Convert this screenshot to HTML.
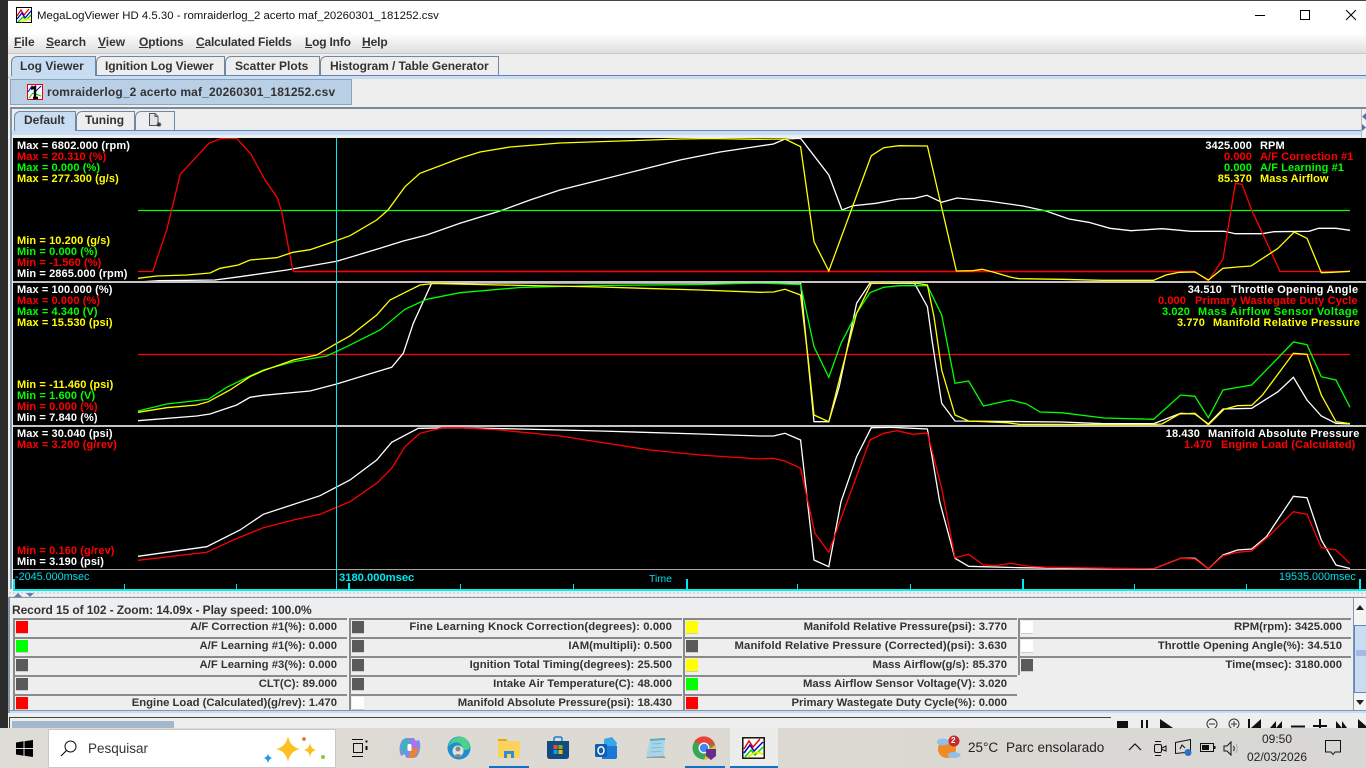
<!DOCTYPE html>
<html><head><meta charset="utf-8"><title>MegaLogViewer HD</title>
<style>
html,body{margin:0;padding:0;width:1366px;height:768px;overflow:hidden;background:#eee}
body{position:relative;font-family:"Liberation Sans",sans-serif}
.a{position:absolute}
.t{position:absolute;white-space:nowrap;line-height:14px;height:14px}
.m{font:bold 12px "Liberation Sans",sans-serif;color:#333;top:35px}
.m u{text-decoration:underline}
.tb{position:absolute;background:#eee;border:1px solid #6f87a0;border-bottom:0;box-sizing:border-box;top:56px;height:20px;border-top-left-radius:6px 6px}
.l{position:absolute;white-space:nowrap;font:bold 11px/11px "Liberation Sans",sans-serif;letter-spacing:.1px;height:11px;margin-top:1px}
.w{color:#fff}.r{color:#f00}.g{color:#0f0}.y{color:#ff0}
.v{position:absolute;white-space:nowrap;font:bold 11px/11px "Liberation Sans",sans-serif;letter-spacing:.1px;height:11px;text-align:right;margin-top:1px}
.c{position:absolute;height:19px;box-sizing:border-box;border-top:2px solid #8a8a8a;border-left:2px solid #8a8a8a;background:#eee}
.s{position:absolute;left:1px;top:1px;width:12px;height:12px;border-bottom:1px solid #ccc}
.c b{position:absolute;top:0;right:10px;font:bold 11.3px/14px "Liberation Sans",sans-serif;color:#333;white-space:nowrap}
.gr{background:#5a5a5a}
svg{position:absolute;display:block}
polyline{fill:none;stroke-width:1.3}
</style></head><body>

<!-- desktop edge -->
<div class="a" style="left:0;top:0;width:8px;height:728px;background:#2c2c2c"></div>
<div class="a" style="left:8px;top:0;width:1358px;height:1px;background:#444"></div>

<!-- title bar -->
<div class="a" style="left:8px;top:1px;width:1358px;height:52px;background:linear-gradient(#fff 0,#fff 32px,#dedede 52px)"></div>
<svg style="left:16px;top:7px" width="16" height="16" viewBox="0 0 16 16"><rect x=".5" y=".5" width="15" height="15" fill="#fff" stroke="#000"/><path d="M1 9 5 3 8 8 13 2" fill="none" stroke="#e00" stroke-width="1.3"/><path d="M1 12 6 6 9 11 15 4" fill="none" stroke="#00c" stroke-width="1.3"/><path d="M2 15 7 10 10 13 15 8" fill="none" stroke="#0c0" stroke-width="1.3"/><path d="M5 15 10 12 15 13" fill="none" stroke="#ee0" stroke-width="1.6"/></svg>
<div class="t" style="left:37px;top:9px;font-size:11.4px;color:#111">MegaLogViewer HD 4.5.30 - romraiderlog_2 acerto maf_20260301_181252.csv</div>
<svg style="left:1250px;top:8px" width="116" height="16" viewBox="0 0 116 16"><path d="M5 7.500H15" stroke="#000" stroke-width="1"/><rect x="50.500" y="2.500" width="9" height="9" fill="none" stroke="#000" stroke-width="1"/><path d="M96 2 106 12M106 2 96 12" stroke="#000" stroke-width="1" fill="none"/></svg>

<!-- menu -->
<div class="t m" style="left:14px"><u>F</u>ile</div>
<div class="t m" style="left:46px"><u>S</u>earch</div>
<div class="t m" style="left:98px"><u>V</u>iew</div>
<div class="t m" style="left:139px;letter-spacing:-.1px"><u>O</u>ptions</div>
<div class="t m" style="left:196px;letter-spacing:-.18px"><u>C</u>alculated Fields</div>
<div class="t m" style="left:305px;letter-spacing:-.2px"><u>L</u>og Info</div>
<div class="t m" style="left:362px;letter-spacing:-.1px"><u>H</u>elp</div>
<div class="a" style="left:8px;top:53px;width:1358px;height:1px;background:#c8c8c8"></div>

<!-- top tabs -->
<div class="tb" style="left:11px;width:85px;background:#c8ddf2;height:21px"></div>
<div class="tb" style="left:96px;width:129px"></div>
<div class="tb" style="left:225px;width:95px"></div>
<div class="tb" style="left:320px;width:179px"></div>
<div class="t m" style="left:20px;top:59px">Log Viewer</div>
<div class="t m" style="left:105px;top:59px;letter-spacing:-.1px">Ignition Log Viewer</div>
<div class="t m" style="left:235px;top:59px">Scatter Plots</div>
<div class="t m" style="left:330px;top:59px;letter-spacing:-.07px">Histogram / Table Generator</div>
<div class="a" style="left:96px;top:75px;width:1270px;height:1px;background:#6382bf"></div>
<div class="a" style="left:8px;top:76px;width:1358px;height:3px;background:#c8ddf2"></div>

<!-- file tab -->
<div class="a" style="left:10px;top:79px;width:342px;height:26px;box-sizing:border-box;background:#b8cfe5;border:1px solid #8da3b8"></div>
<svg style="left:27px;top:84px" width="16" height="16" viewBox="0 0 16 16"><rect x=".5" y=".5" width="15" height="15" fill="#fff" stroke="#e00"/><path d="M1 8 5 2 9 7 14 2" fill="none" stroke="#00c"/><path d="M2 14 6 9 14 12" fill="none" stroke="#0c0"/><path d="M4 5 8 3V14H6M8 14H11" fill="none" stroke="#000" stroke-width="2.4"/></svg>
<div class="t m" style="left:47px;top:85px;letter-spacing:.15px">romraiderlog_2 acerto maf_20260301_181252.csv</div>
<div class="a" style="left:10px;top:107px;width:1356px;height:2px;background:#7a8a99"></div>
<div class="a" style="left:10px;top:109px;width:2px;height:480px;background:#8297ad"></div>

<!-- inner tabs -->
<div class="tb" style="left:14px;top:111px;width:62px;height:20px;background:#c8ddf2"></div>
<div class="tb" style="left:76px;top:111px;width:59px;height:19px"></div>
<div class="tb" style="left:135px;top:111px;width:40px;height:19px"></div>
<div class="t m" style="left:24px;top:113px">Default</div>
<div class="t m" style="left:85px;top:113px">Tuning</div>
<svg style="left:148px;top:112px" width="14" height="16" viewBox="0 0 14 16"><path d="M1.500 1.500H7L10 4.500V13.500H1.500Z" fill="#dfe3ea" stroke="#555"/><path d="M7 1.500V4.500H10" fill="none" stroke="#555"/><path d="M11 10V15M8.500 12.500H13.500M9.300 10.800 12.700 14.200M12.700 10.800 9.300 14.200" stroke="#333" stroke-width=".8"/></svg>
<div class="a" style="left:76px;top:130px;width:1285px;height:1px;background:#6382bf"></div>
<div class="a" style="left:12px;top:131px;width:1349px;height:4px;background:#c8ddf2"></div>
<div class="a" style="left:12px;top:135px;width:1354px;height:3px;background:#eee"></div>
<div class="a" style="left:1361px;top:109px;width:5px;height:29px;background:#f2f2f2;border-left:1px solid #bbb;box-sizing:border-box"></div>
<svg style="left:1362px;top:112px" width="4" height="20" viewBox="0 0 4 20"><path d="M4 1 0 4.500 4 8ZM0 12 4 15.500 0 19Z" fill="#4d6fb5"/></svg>

<!-- charts -->
<div class="a" style="left:13px;top:138px;width:1353px;height:453px;background:#000"></div>
<div class="a" style="left:13px;top:280.500px;width:1353px;height:2px;background:#c4c4c4"></div>
<div class="a" style="left:13px;top:425px;width:1353px;height:2px;background:#c4c4c4"></div>
<div class="a" style="left:13px;top:569px;width:1353px;height:1px;background:#a8a8a8"></div>

<svg style="left:0;top:138px" width="1366" height="143" viewBox="0 138 1366 143">
<polyline stroke="#fff" points="138,282 159,280.700 215,280 240,276.700 286.700,270 336.700,261.300 376.700,249.300 403.300,241 426.700,235 460,223.300 500,211 530,200 560,190 600,180 640,170 680,160 720,152 760,146 773.500,144 785,139 800.600,138.300 828.800,175 842,210 852.800,205.700 876,203.300 899,199 914.600,198.300 927,195.300 941.700,202.300 957,198 988,201 1023,206 1046,211 1069,219 1088.600,222.300 1110,228.300 1131,230.700 1162,228.700 1191,231.300 1224,231.300 1235.400,233.700 1262.500,233.700 1274,231.700 1309,231.300 1318.600,228.300 1336,228.300 1350,230.300"/>
<line x1="138" x2="1350" y1="210.500" y2="210.500" stroke="#0f0" stroke-width="1.300"/>
<polyline stroke="#f00" points="138,271.500 152.700,271.500 166.700,230 180.300,174.300 195,158.300 209,143.300 221.700,138.300 236.700,138.300 251,154.300 265,180 277.300,197.700 281.700,211.700 292.700,270 294,271.500 1194.900,271.500 1208.400,281 1223,259 1235.400,183.300 1242,184.300 1251.700,210 1262.500,233.300 1280,271.500 1350,271.500"/>
<line x1="294" x2="1195" y1="271.500" y2="271.500" stroke="#f00" stroke-width="1.600"/>
<polyline stroke="#ff0" points="138,278.300 156.700,276 186.700,275 210,273 220,268.300 238.300,265 250,260 276.700,257.700 293,252.300 310,249.700 333.300,241.700 350,235.700 376.700,220 388,210 405,186.700 420,173.300 460,158.300 480,152 510,147 560,143 620,141 680,139 710,138.500 760,139.300 785,139 800.600,146.700 814,241.700 828.800,271 871.300,155.700 883.700,147.700 899,145.700 927.400,146 956.400,271 972.600,270.700 982.300,269.300 992,271.700 1011,277.300 1019,278.700 1061.500,279.300 1102,280.300 1153.500,280.300 1165.900,275 1179.400,272.300 1194.900,272 1208.400,280 1223,268.300 1237.400,267 1251,266 1278,248.300 1294.200,232 1307,238.300 1321.300,272.700 1332,272.300 1350,271.300"/>
</svg>

<svg style="left:0;top:283px" width="1366" height="142" viewBox="0 283 1366 142">
<line x1="138" x2="1350" y1="354.500" y2="354.500" stroke="#f00" stroke-width="1.300"/>
<polyline stroke="#fff" points="138,420.700 196.700,416 210,414 236.700,405 250,397.300 263.300,395.300 310,391 336.700,384 376.700,371.700 391.700,367.300 403.300,353.300 413.300,323.300 431.700,283 800.600,283 814,421.700 828.800,421.700 839.200,386.700 856.600,303.300 870,283 914.600,283.500 927.400,306.700 932,340 941.700,403.300 955,421 1061.500,422 1104,423.700 1153.500,423.700 1180.600,413.300 1194.900,414 1208.400,424 1223,409 1251.700,408.300 1278,391.700 1293.400,377.300 1307,400 1321.300,416 1336,423.300 1350,424"/>
<polyline stroke="#0f0" points="138,411 166.700,404 208.300,399.300 226.700,387.300 250,376 263.300,370 293.300,361.700 326.700,356 346.700,346.700 380,330 405,309.300 426.700,299.300 460,292.700 520,287.500 600,285.500 700,284.500 760,283 800.600,284.500 814,346.700 828.800,377.300 841,343.300 856.600,313.300 870,292.700 883.700,287.300 899,285.700 927.400,285.700 941.700,315 955,383.300 968.700,381 983.400,406 995.800,403.300 1011,400 1026.700,404 1040,412 1061.500,412.700 1104,418 1153.500,419.300 1180.600,395 1194.900,396.300 1208.400,417.700 1223,390 1251.700,385 1293.400,342 1307,344.700 1321.300,376.700 1336,380 1350,407.300"/>
<polyline stroke="#ff0" points="138,412.300 166.700,407.700 196.700,405 208.300,401.700 230,390 250,376.700 263.300,370.700 293.300,360 316.700,355 336.700,343.300 350,336 376.700,315 390,300 403.300,293.300 420,285 433.300,283.500 500,285 600,287 700,290 760,292.300 773.500,292 785,289.300 800.600,295 808.300,360 814,415 828.800,421.700 841,373.300 856.600,313.300 871.300,283.500 914.600,283 927.400,285 934,316.700 941.700,370 955,415 968.700,421 1007,422.700 1019,424.300 1144.600,424.800 1162,424 1179.400,414 1194.900,413.300 1208.400,424.800 1224,409.300 1237.400,405.700 1251.700,405.300 1262.500,395 1293.400,353.300 1307,354.300 1321.300,395 1336,421.700 1350,423.700"/>
</svg>

<svg style="left:0;top:427px" width="1366" height="142" viewBox="0 427 1366 142">
<polyline stroke="#fff" points="138,556.300 206.700,546.700 240,530 263.300,514.300 320,495.700 350,480 376.700,460 391.700,442.300 418.300,428.300 453.300,427.700 520,429 600,431 700,434 760,436 773.500,436 785,433.300 800.600,440 814,560 828.800,566.700 841,501.700 856.600,456.700 871.300,427.700 891.400,427.300 927.400,429 939.700,501.700 955,558.300 968.700,566.300 1019,567.700 1075,568.500 1153.500,568.800 1180.600,558.300 1194.900,558.300 1208.400,568.800 1223,555 1237.400,550 1251.700,549 1266.400,536.700 1293.400,496.300 1307,497.700 1321.300,540 1336,565 1350,568.500"/>
<polyline stroke="#f00" points="138,560.300 206.700,552.300 233.300,540 263.300,527.700 293.300,520 320,514.300 350,501.700 376.700,483.300 391.700,468.300 405,446.700 420,433.300 443,427.700 460,427.700 500,430 560,436 650,450 700,455 760,459 773.500,458.300 785,461 800.600,468.300 808.300,503.300 814.900,533.300 828.800,552.300 841,518.300 870,440 883.700,433.300 897,430.700 912.700,434.300 927.400,433 941.700,488.300 955,557.700 968.700,554.300 983.400,565 995.800,565.700 1011,563.300 1026.700,566 1046,567.300 1115.600,568.300 1153.500,568.800 1180.600,558.300 1194.900,559 1208.400,568.800 1223,555.700 1237.400,552.300 1251.700,551 1270,535 1293.400,511.700 1307,514.300 1321.300,547.700 1336,550 1350,563.700"/>
</svg>

<!-- axis -->
<div class="a" style="left:13px;top:589px;width:1353px;height:2px;background:#00f0f0"></div>
<div class="a" style="left:336px;top:138px;width:1.300px;height:452px;background:#00e8f0"></div>
<div class="a" style="left:13px;top:579px;width:1.500px;height:10px;background:#00e8f0"></div>
<div class="a" style="left:124px;top:584px;width:1px;height:5px;background:#00e8f0"></div>
<div class="a" style="left:236px;top:584px;width:1px;height:5px;background:#00e8f0"></div>
<div class="a" style="left:348px;top:583px;width:2px;height:6px;background:#00e8f0"></div>
<div class="a" style="left:460px;top:584px;width:1px;height:5px;background:#00e8f0"></div>
<div class="a" style="left:573px;top:584px;width:1px;height:5px;background:#00e8f0"></div>
<div class="a" style="left:686px;top:579px;width:2px;height:10px;background:#00e8f0"></div>
<div class="a" style="left:797px;top:584px;width:1px;height:5px;background:#00e8f0"></div>
<div class="a" style="left:910px;top:584px;width:1px;height:5px;background:#00e8f0"></div>
<div class="a" style="left:1022px;top:579px;width:2px;height:10px;background:#00e8f0"></div>
<div class="a" style="left:1134px;top:584px;width:1px;height:5px;background:#00e8f0"></div>
<div class="a" style="left:1246px;top:584px;width:1px;height:5px;background:#00e8f0"></div>
<div class="a" style="left:1359px;top:579px;width:2px;height:10px;background:#00e8f0"></div>
<div class="t" style="left:15px;top:570px;font-size:10.800px;color:#00dfe8">-2045.000msec</div>
<div class="t" style="left:339px;top:571px;font:bold 11.200px/14px 'Liberation Sans',sans-serif;color:#00e8f0">3180.000msec</div>
<div class="t" style="left:649px;top:572px;font-size:10.500px;color:#00dfe8">Time</div>
<div class="t" style="left:1279px;top:570px;font-size:10.800px;color:#00dfe8">19535.000msec</div>

<!-- left labels -->
<div class="l w" style="left:17px;top:140px">Max = 6802.000 (rpm)</div>
<div class="l r" style="left:17px;top:151px">Max = 20.310 (%)</div>
<div class="l g" style="left:17px;top:162px">Max = 0.000 (%)</div>
<div class="l y" style="left:17px;top:173px">Max = 277.300 (g/s)</div>
<div class="l y" style="left:17px;top:235px">Min = 10.200 (g/s)</div>
<div class="l g" style="left:17px;top:246px">Min = 0.000 (%)</div>
<div class="l r" style="left:17px;top:257px">Min = -1.560 (%)</div>
<div class="l w" style="left:17px;top:268px">Min = 2865.000 (rpm)</div>

<div class="l w" style="left:17px;top:284px">Max = 100.000 (%)</div>
<div class="l r" style="left:17px;top:295px">Max = 0.000 (%)</div>
<div class="l g" style="left:17px;top:306px">Max = 4.340 (V)</div>
<div class="l y" style="left:17px;top:317px">Max = 15.530 (psi)</div>
<div class="l y" style="left:17px;top:379px">Min = -11.460 (psi)</div>
<div class="l g" style="left:17px;top:390px">Min = 1.600 (V)</div>
<div class="l r" style="left:17px;top:401px">Min = 0.000 (%)</div>
<div class="l w" style="left:17px;top:412px">Min = 7.840 (%)</div>

<div class="l w" style="left:17px;top:428px">Max = 30.040 (psi)</div>
<div class="l r" style="left:17px;top:439px">Max = 3.200 (g/rev)</div>
<div class="l r" style="left:17px;top:545px">Min = 0.160 (g/rev)</div>
<div class="l w" style="left:17px;top:556px">Min = 3.190 (psi)</div>

<!-- right labels -->
<div class="v w" style="left:1192px;width:60px;top:140px">3425.000</div><div class="l w" style="left:1260px;top:140px">RPM</div>
<div class="v r" style="left:1192px;width:60px;top:151px">0.000</div><div class="l r" style="left:1260px;top:151px">A/F Correction #1</div>
<div class="v g" style="left:1192px;width:60px;top:162px">0.000</div><div class="l g" style="left:1260px;top:162px">A/F Learning #1</div>
<div class="v y" style="left:1192px;width:60px;top:173px">85.370</div><div class="l y" style="left:1260px;top:173px">Mass Airflow</div>

<div class="v w" style="left:1162px;width:60px;top:284px">34.510</div><div class="l w" style="left:1231px;top:284px;letter-spacing:.25px">Throttle Opening Angle</div>
<div class="v r" style="left:1126px;width:60px;top:295px">0.000</div><div class="l r" style="left:1195px;top:295px;letter-spacing:.15px">Primary Wastegate Duty Cycle</div>
<div class="v g" style="left:1130px;width:60px;top:306px">3.020</div><div class="l g" style="left:1198px;top:306px;letter-spacing:.4px">Mass Airflow Sensor Voltage</div>
<div class="v y" style="left:1145px;width:60px;top:317px">3.770</div><div class="l y" style="left:1213px;top:317px;letter-spacing:.25px">Manifold Relative Pressure</div>

<div class="v w" style="left:1140px;width:60px;top:428px">18.430</div><div class="l w" style="left:1208px;top:428px;letter-spacing:.25px">Manifold Absolute Pressure</div>
<div class="v r" style="left:1152px;width:60px;top:439px">1.470</div><div class="l r" style="left:1221px;top:439px">Engine Load (Calculated)</div>

<!-- splitter -->
<div class="a" style="left:8px;top:591px;width:1358px;height:6px;background:#eee;background-image:radial-gradient(#9a9a9a .6px,transparent .8px);background-size:4px 4px"></div>
<svg style="left:14px;top:593px" width="22" height="4" viewBox="0 0 22 4"><path d="M0 4 4 0 8 4Z" fill="#5b7fb5"/><path d="M12 0H20L16 4Z" fill="#5b7fb5"/></svg>

<!-- info panel -->
<div class="a" style="left:8px;top:597px;width:1358px;height:116px;background:#eee;border-top:1px solid #8297ad;box-sizing:border-box"></div>
<div class="a" style="left:8px;top:597px;width:2px;height:116px;background:#8297ad"></div>
<div class="t m" style="left:12px;top:603px;letter-spacing:-.1px">Record 15 of 102 - Zoom: 14.09x - Play speed: 100.0%</div>

<div class="c" style="left:13px;top:618px;width:334px"><span class="s" style="background:#f00"></span><b>A/F Correction #1(%): 0.000</b></div>
<div class="c" style="left:13px;top:637px;width:334px"><span class="s" style="background:#0f0"></span><b>A/F Learning #1(%): 0.000</b></div>
<div class="c" style="left:13px;top:656px;width:334px"><span class="s gr"></span><b>A/F Learning #3(%): 0.000</b></div>
<div class="c" style="left:13px;top:675px;width:334px"><span class="s gr"></span><b>CLT(C): 89.000</b></div>
<div class="c" style="left:13px;top:694px;width:334px"><span class="s" style="background:#f00"></span><b>Engine Load (Calculated)(g/rev): 1.470</b></div>

<div class="c" style="left:349px;top:618px;width:333px"><span class="s gr"></span><b style="letter-spacing:.1px">Fine Learning Knock Correction(degrees): 0.000</b></div>
<div class="c" style="left:349px;top:637px;width:333px"><span class="s gr"></span><b>IAM(multipli): 0.500</b></div>
<div class="c" style="left:349px;top:656px;width:333px"><span class="s gr"></span><b>Ignition Total Timing(degrees): 25.500</b></div>
<div class="c" style="left:349px;top:675px;width:333px"><span class="s gr"></span><b>Intake Air Temperature(C): 48.000</b></div>
<div class="c" style="left:349px;top:694px;width:333px"><span class="s" style="background:#fff"></span><b>Manifold Absolute Pressure(psi): 18.430</b></div>

<div class="c" style="left:683px;top:618px;width:334px"><span class="s" style="background:#ff0"></span><b>Manifold Relative Pressure(psi): 3.770</b></div>
<div class="c" style="left:683px;top:637px;width:334px"><span class="s gr"></span><b style="letter-spacing:.1px">Manifold Relative Pressure (Corrected)(psi): 3.630</b></div>
<div class="c" style="left:683px;top:656px;width:334px"><span class="s" style="background:#ff0"></span><b>Mass Airflow(g/s): 85.370</b></div>
<div class="c" style="left:683px;top:675px;width:334px"><span class="s" style="background:#0f0"></span><b>Mass Airflow Sensor Voltage(V): 3.020</b></div>
<div class="c" style="left:683px;top:694px;width:334px"><span class="s" style="background:#f00"></span><b>Primary Wastegate Duty Cycle(%): 0.000</b></div>

<div class="c" style="left:1018px;top:618px;width:333px"><span class="s" style="background:#fff"></span><b style="right:9px">RPM(rpm): 3425.000</b></div>
<div class="c" style="left:1018px;top:637px;width:333px"><span class="s" style="background:#fff"></span><b style="right:9px">Throttle Opening Angle(%): 34.510</b></div>
<div class="c" style="left:1018px;top:656px;width:333px"><span class="s gr"></span><b style="right:9px">Time(msec): 3180.000</b></div>

<!-- right scrollbar -->
<div class="a" style="left:1353px;top:598px;width:13px;height:113px;background:#f4f4f4;border-left:1px solid #8297ad;box-sizing:border-box"></div>
<div class="a" style="left:1354px;top:625px;width:12px;height:68px;background:#c8ddf2;border:1px solid #6382bf;border-right:0;box-sizing:border-box"></div>
<svg style="left:1354px;top:603px" width="12" height="104" viewBox="0 0 12 104"><path d="M2 7 6 2 10 7Z" fill="#222"/><path d="M2 97H10L6 102Z" fill="#222"/><path d="M2 48H12M2 50H12M2 52H12" stroke="#6382bf" stroke-width=".8"/></svg>

<!-- panel bottom -->
<div class="a" style="left:8px;top:710px;width:1358px;height:1px;background:#8297ad"></div>
<div class="a" style="left:10px;top:711px;width:1356px;height:2px;background:#c8ddf2"></div>
<div class="a" style="left:8px;top:713px;width:1358px;height:15px;background:#eee"></div>
<div class="a" style="left:9px;top:717px;width:1102px;height:1px;background:#444"></div>
<div class="a" style="left:9px;top:717px;width:1px;height:11px;background:#444"></div>
<div class="a" style="left:12px;top:721px;width:162px;height:7px;background:#a3b8cc"></div>

<!-- player buttons -->
<svg style="left:1112px;top:716px" width="254" height="12" viewBox="1112 716 254 12">
<path d="M1117 721H1128V728H1117Z" fill="#111"/>
<path d="M1141 720H1143V728H1141ZM1146 720H1148V728H1146Z" fill="#111"/>
<path d="M1160 719 1173 728H1160Z" fill="#111"/>
<circle cx="1212" cy="724" r="5" fill="none" stroke="#333"/><path d="M1209 724H1215" stroke="#333"/>
<circle cx="1234" cy="724" r="5" fill="none" stroke="#333"/><path d="M1231 724H1237M1234 721V727" stroke="#333"/>
<path d="M1248 719H1250V728H1248ZM1251 728 1261 719V728Z" fill="#111"/>
<path d="M1270 728 1276 721V728ZM1276 728 1282 721V728Z" fill="#111"/>
<path d="M1291 726.500H1305" stroke="#111" stroke-width="2"/>
<path d="M1313 726H1327M1320 719V728" stroke="#111" stroke-width="2"/>
<path d="M1336 721 1342 728H1336ZM1342 721 1347 728H1342Z" fill="#111"/>
<path d="M1358 719 1366 726V728H1358Z" fill="#111"/>
</svg>

<!-- taskbar -->
<div class="a" style="left:0;top:728px;width:1366px;height:40px;background:linear-gradient(90deg,#dedcd6,#dcd9d2 60%,#d7d7d5)"></div>
<svg style="left:16px;top:740px" width="17" height="17" viewBox="0 0 17 17"><path d="M0 2.500 7.500 1.300V8H0ZM8.500 1.200 17 0V8H8.500ZM0 9H7.500V15.700L0 14.500ZM8.500 9H17V17L8.500 15.800Z" fill="#000"/></svg>
<div class="a" style="left:48px;top:729px;width:288px;height:39px;background:#fff;border:1px solid #c8c8c8;box-sizing:border-box"></div>
<svg style="left:60px;top:740px" width="17" height="17" viewBox="0 0 17 17"><circle cx="10.500" cy="6.500" r="5.500" fill="none" stroke="#111"/><path d="M6.500 10.500 1 16" stroke="#111" stroke-width="1.200"/></svg>
<div class="t" style="left:88px;top:742px;font-size:13.500px;color:#333">Pesquisar</div>
<svg style="left:262px;top:734px" width="68" height="30" viewBox="0 0 68 30"><path d="M26 2Q28 13 38 15 28 17 26 28 24 17 14 15 24 13 26 2Z" fill="#fbbf20"/><path d="M48 9Q49 15 54 16 49 17 48 23 47 17 42 16 47 15 48 9Z" fill="#fbbf20"/><path d="M6 20Q7 23 10 24 7 25 6 29 5 25 2 24 5 23 6 20Z" fill="#1e9be8"/><circle cx="42" cy="5" r="1.800" fill="#e8641e"/><circle cx="61" cy="23" r="2" fill="#8cc63f"/></svg>
<svg style="left:351px;top:738px" width="18" height="20" viewBox="0 0 18 20"><path d="M1 1.500H12M1 18.500H12" stroke="#111"/><rect x="2.500" y="5.500" width="9" height="9" fill="none" stroke="#111"/><rect x="14.500" y="2.500" width="2" height="2" fill="#111"/><rect x="14.500" y="8" width="2" height="4" fill="#111"/></svg>
<!-- copilot -->
<svg style="left:398px;top:736px" width="24" height="24" viewBox="0 0 24 24"><path d="M9 2H15Q17 2 17.500 5L21 4Q24 10 20 19 18 22 15 22H10Q7 22 7 18L3 20Q0 13 3 6 5 2 9 2Z" fill="#7a8ee8"/><path d="M4 7Q6 2 11 3L8 13Q6 18 4 18Z" fill="#35b8b0"/><path d="M13 12H20Q20 20 15 22H10Q13 18 13 12Z" fill="#e8823c"/><path d="M13 3Q17 2 18 6L20 12H14Z" fill="#b070e8"/><rect x="9.500" y="8" width="4" height="7" rx="1.500" fill="#fff"/></svg>
<!-- edge -->
<svg style="left:447px;top:736px" width="24" height="24" viewBox="0 0 24 24"><circle cx="12" cy="12" r="11.500" fill="#1c8fd0"/><path d="M1 11Q4 1 13 1 21 1 23 10 23 14 18 14 13 14 15 10 12 5 6 7 2 9 1 11Z" fill="#4dd08c"/><circle cx="11" cy="15" r="5.500" fill="#e0e0e0"/><circle cx="11" cy="13" r="2.500" fill="#888"/><path d="M6 21Q11 15 16 21Z" fill="#888"/></svg>
<!-- explorer -->
<svg style="left:497px;top:737px" width="24" height="22" viewBox="0 0 24 22"><path d="M1 2H9L11 4H1Z" fill="#e6a817"/><rect x="1" y="4" width="22" height="17" fill="#fcd35a"/><path d="M7 21V14H17V21H14V17H10V21Z" fill="#2b8fd6"/></svg>
<!-- store -->
<svg style="left:546px;top:736px" width="24" height="24" viewBox="0 0 24 24"><path d="M8 5V3Q8 1 10 1H14Q16 1 16 3V5" fill="none" stroke="#1b80c8" stroke-width="1.500"/><path d="M1 5H23V20Q23 23 20 23H4Q1 23 1 20Z" fill="#114b82"/><rect x="7.500" y="9" width="4" height="4" fill="#f25022"/><rect x="12.500" y="9" width="4" height="4" fill="#7fba00"/><rect x="7.500" y="14" width="4" height="4" fill="#00a4ef"/><rect x="12.500" y="14" width="4" height="4" fill="#ffb900"/></svg>
<!-- outlook -->
<svg style="left:594px;top:736px" width="24" height="24" viewBox="0 0 24 24"><path d="M10 3 18 1 23 7 21 14H10Z" fill="#38a6e8"/><path d="M8 10H23V21Q23 23 21 23H8Z" fill="#1b78d4"/><rect x="1" y="8" width="12" height="13" rx="1.500" fill="#0f5fb0"/><ellipse cx="7" cy="14.500" rx="3" ry="3.800" fill="none" stroke="#fff" stroke-width="1.500"/></svg>
<!-- notepad -->
<svg style="left:644px;top:737px" width="23" height="22" viewBox="0 0 23 22"><path d="M6 2 21 1 20 19 2 20Z" fill="#a8d6e8"/><path d="M6 2 21 1 21 3 6 4Z" fill="#5ba8c8"/><path d="M8 7 18 6.500M7 11 18 10.500M6 15 17 14.500" stroke="#7eb3c8" stroke-width=".7"/><path d="M20 19 22 21 3 21 2 20Z" fill="#9a9a9a"/></svg>
<!-- chrome -->
<svg style="left:692px;top:736px" width="26" height="24" viewBox="0 0 26 24"><circle cx="12" cy="12" r="11.500" fill="#34a853"/><path d="M2 6A11.500 11.500 0 0 1 23 9H12Z" fill="#ea4335"/><path d="M23 9A11.500 11.500 0 0 1 12 23.500L16 14Z" fill="#fbbc04"/><circle cx="12" cy="12" r="5.500" fill="#fff"/><circle cx="12" cy="12" r="4.200" fill="#4285f4"/><path d="M14 13H24V20L19 24 14 20Z" fill="#6a2b90"/></svg>
<!-- MLV -->
<div class="a" style="left:730px;top:728px;width:48px;height:40px;background:#ececea"></div>
<svg style="left:742px;top:737px" width="23" height="22" viewBox="0 0 23 22"><rect x=".8" y=".8" width="21.400" height="20.400" fill="#fff" stroke="#000" stroke-width="1.400"/><path d="M2 12 7 4 11 10 18 2" fill="none" stroke="#e00" stroke-width="1.500"/><path d="M2 16 8 8 12 14 21 5" fill="none" stroke="#00c" stroke-width="1.500"/><path d="M3 20 9 13 13 18 21 10" fill="none" stroke="#0c0" stroke-width="1.500"/><path d="M6 20 14 15 21 17" fill="none" stroke="#ee0" stroke-width="2"/></svg>
<div class="a" style="left:489px;top:766px;width:40px;height:2px;background:#0a74c8"></div>
<div class="a" style="left:685px;top:766px;width:40px;height:2px;background:#0a74c8"></div>
<div class="a" style="left:730px;top:766px;width:48px;height:2px;background:#0a74c8"></div>

<!-- tray -->
<svg style="left:936px;top:735px" width="26" height="24" viewBox="0 0 26 24"><circle cx="11" cy="14" r="9" fill="#f08a24"/><ellipse cx="7" cy="7" rx="6" ry="3.500" fill="#8fc0e8"/><ellipse cx="18" cy="20" rx="6.500" ry="3" fill="#8fc0e8"/><circle cx="18" cy="6" r="5.500" fill="#c42b2b"/></svg>
<div class="t" style="left:951px;top:736px;font:bold 8px/10px 'Liberation Sans',sans-serif;color:#fff;height:10px">2</div>
<div class="t" style="left:968px;top:741px;font-size:13.500px;color:#222">25°C</div>
<div class="t" style="left:1006px;top:741px;font-size:13.500px;color:#222">Parc ensolarado</div>
<svg style="left:1128px;top:742px" width="14" height="9" viewBox="0 0 14 9"><path d="M1 8 7 2 13 8" fill="none" stroke="#111" stroke-width="1.200"/></svg>
<svg style="left:1153px;top:740px" width="14" height="17" viewBox="0 0 14 17"><rect x="1.500" y="4.500" width="7" height="8" rx="1.500" fill="none" stroke="#111"/><path d="M9 8 13 6V11L9 9.500" fill="none" stroke="#111"/><path d="M2 1.500H8M2 15.500H8" stroke="#111"/></svg>
<svg style="left:1175px;top:739px" width="18" height="18" viewBox="0 0 18 18"><path d="M.5 3.500 15.500.5V13L.5 14.500Z" fill="none" stroke="#111"/><path d="M5 10 7 6 10 9" fill="none" stroke="#111"/><circle cx="13" cy="13.500" r="3.500" fill="#2a72c8"/></svg>
<svg style="left:1200px;top:743px" width="16" height="10" viewBox="0 0 16 10"><rect x=".5" y=".5" width="13" height="8" fill="none" stroke="#111"/><rect x="2" y="2" width="7" height="5" fill="#111"/><rect x="14" y="3" width="1.500" height="3" fill="#111"/></svg>
<svg style="left:1223px;top:741px" width="17" height="15" viewBox="0 0 17 15"><path d="M1 5H4L8 1V14L4 10H1Z" fill="none" stroke="#111"/><path d="M10.500 5Q12 7.500 10.500 10" fill="none" stroke="#111"/><path d="M13 3Q15.500 7.500 13 12" fill="none" stroke="#aaa"/></svg>
<div class="t" style="left:1247px;width:60px;top:732px;font-size:12px;color:#222;text-align:center">09:50</div>
<div class="t" style="left:1237px;width:80px;top:750px;font-size:12px;color:#222;text-align:center">02/03/2026</div>
<svg style="left:1324px;top:739px" width="18" height="17" viewBox="0 0 18 17"><path d="M1.500 1.500H16.500V13H11L9 15.500 7 13H1.500Z" fill="none" stroke="#111"/></svg>

</body></html>
